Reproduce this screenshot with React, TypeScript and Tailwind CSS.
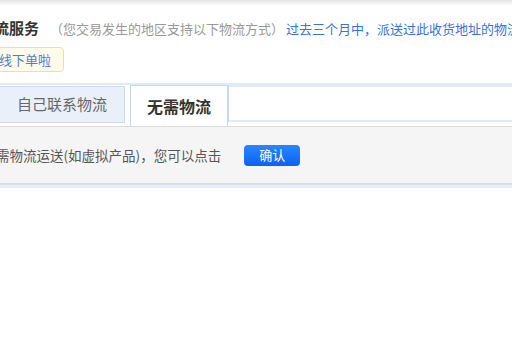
export default function App() {
  return (
    <div className="w-[512px] h-[340px] overflow-hidden bg-white font-['Noto_Sans_CJK_SC','Noto_Sans',sans-serif]">
      {/* top strip */}
      <div className="h-[6px] bg-gradient-to-b from-[#e4e4e4] to-white" />

      {/* title row */}
      <div className="flex items-baseline whitespace-nowrap -ml-[6px] mt-[11px] h-[20px]">
        <span className="text-[15px] font-bold text-[#333]">流服务</span>
        <span className="ml-[11px] text-[13px] text-[#999]">（您交易发生的地区支持以下物流方式）</span>
        <span className="ml-[2px] text-[13px] text-[#3c6fd8]">过去三个月中，派送过此收货地址的物流公司</span>
      </div>

      {/* notice */}
      <div className="mt-[10px] -ml-[10px] w-[74px] h-[25px] flex items-center pl-[8px] border border-[#fbd9a5] bg-[#fffbea] rounded-sm whitespace-nowrap">
        <span className="text-[13px] text-[#4b7fd6]">线下单啦</span>
      </div>

      {/* tabs */}
      <div className="mt-[11px] flex h-[43px] border-t-2 border-[#e1eaf7]">
        <div className="mt-[1px] w-[125px] h-[37px] flex items-center justify-center bg-[#e9f0fa] border border-l-0 border-[#cbdaf0] text-[15px] text-[#666]">
          自己联系物流
        </div>
        <div className="ml-[5px] w-[98px] h-[41px] flex items-center justify-center bg-white border border-b-0 border-[#c6d7f0] text-[16px] font-semibold text-[#333]">
          无需物流
        </div>
        <div className="flex-1 h-[37px] border-y-2 border-[#e1eaf7] border-l border-l-[#c6d7f0]" />
      </div>

      {/* panel */}
      <div className="h-[59px] flex items-center bg-[#f5f5f5] border-t border-[#dcdcdc] border-b-2 border-b-[#d9dee6]">
        <span className="-ml-[4px] whitespace-nowrap text-[13.5px] text-[#555]">
          需物流运送(如虚拟产品)，您可以点击
        </span>
        <button className="ml-[23px] w-[56px] h-[21px] rounded-[4px] bg-gradient-to-b from-[#2a86ff] to-[#0a62f0] text-[13px] text-white flex items-center justify-center">
          确认
        </button>
      </div>
      <div className="h-[3px] bg-[#e6eef9]" />
    </div>
  );
}
